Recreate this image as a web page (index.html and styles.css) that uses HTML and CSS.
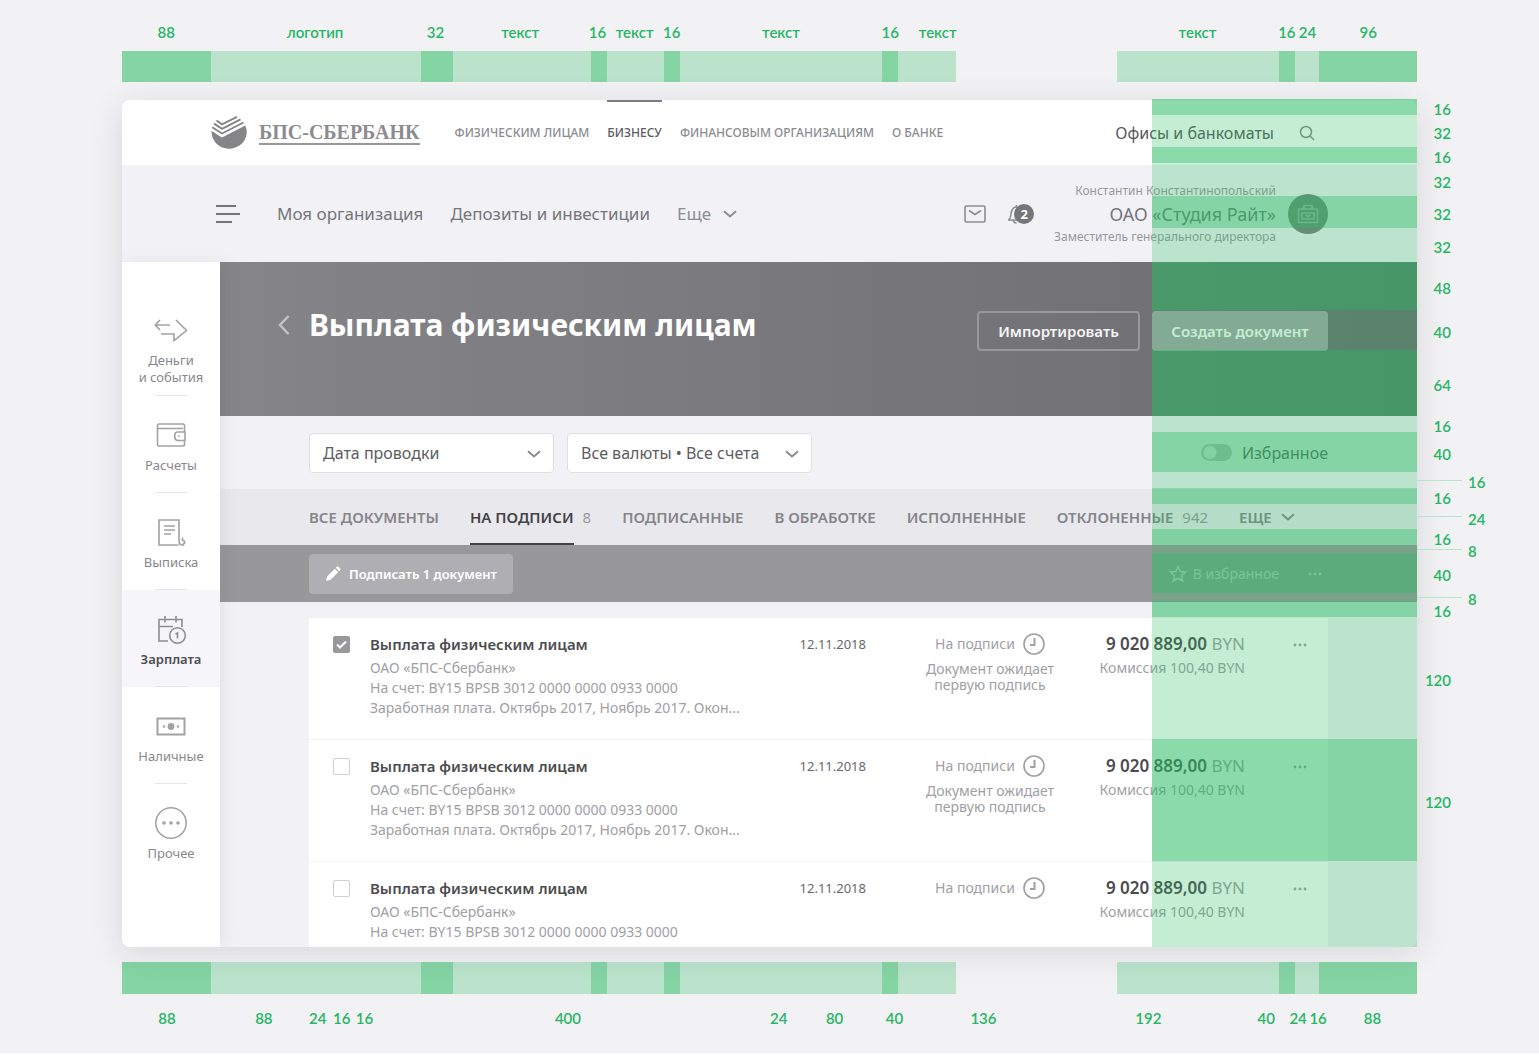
FILE: index.html
```
<!DOCTYPE html>
<html lang="ru">
<head>
<meta charset="utf-8">
<meta name="viewport" content="width=device-width, initial-scale=1">
<title>Выплата физическим лицам</title>
<link rel="stylesheet" href="styles.css">
</head>
<body>
<svg class="defs" width="0" height="0" aria-hidden="true">
  <symbol id="i-down" viewBox="0 0 14 8"><path d="M1 1.2l6 5.3 6-5.3" fill="none" stroke="currentColor" stroke-width="2"/></symbol>
  <symbol id="i-dots" viewBox="0 0 14 4"><g fill="currentColor"><circle cx="2" cy="2" r="1.4"/><circle cx="7" cy="2" r="1.4"/><circle cx="12" cy="2" r="1.4"/></g></symbol>
  <symbol id="i-clock" viewBox="0 0 22 22"><g fill="none" stroke="currentColor" stroke-width="1.6"><circle cx="11" cy="11" r="10"/><path d="M11.5 5v7H7" stroke-width="2"/></g></symbol>
</svg>

<div class="page">
  <div class="ruler ruler-top">
    <span class="num">88</span><span class="num">логотип</span><span class="num">32</span><span class="num">текст</span><span class="num">16</span><span class="num">текст</span><span class="num">16</span><span class="num">текст</span><span class="num">16</span><span class="num num-end">текст</span><span></span><span class="num">текст</span><span class="num">16</span><span class="num">24</span><span class="num">96</span>
  </div>
  <div class="ruler bar">
    <i class="dark"></i><i class="light"></i><i class="dark"></i><i class="light"></i><i class="dark"></i><i class="light"></i><i class="dark"></i><i class="light"></i><i class="dark"></i><i class="light"></i><i></i><i class="light"></i><i class="dark"></i><i class="light"></i><i class="dark"></i>
  </div>

  <div class="stage">
    <div class="app">
      <header class="topbar">
        <a class="logo" href="#">
          <svg width="36" height="34" viewBox="0 0 36 34"><path d="M.6 15L11 21.500 34.200 9.500A17.600 16.500 0 1 1 .6 15z" fill="#858588"/><g fill="none" stroke="#858588" stroke-width="1.900"><path d="M1.200 11.300L11 17.500 32.500 6.500"/><path d="M3 7.600L11 12.900 29.500 3.400"/><path d="M5.500 4.500L11 8.300 26 .9"/></g></svg>
          <span class="logo-text">БПС-СБЕРБАНК</span>
        </a>
        <nav class="sites">
          <a href="#">ФИЗИЧЕСКИМ ЛИЦАМ</a><a href="#" class="active">БИЗНЕСУ</a><a href="#">ФИНАНСОВЫМ ОРГАНИЗАЦИЯМ</a><a href="#">О БАНКЕ</a>
        </nav>
        <a class="offices" href="#">Офисы и банкоматы</a>
        <button class="icon-btn search" aria-label="Поиск"><svg width="16" height="16" viewBox="0 0 16 16" fill="none" stroke="currentColor" stroke-width="1.500"><circle cx="7" cy="7" r="5.500"/><path d="M11 11l4 4"/></svg></button>
      </header>

      <div class="subbar">
        <button class="icon-btn" aria-label="Меню"><svg width="25" height="20" viewBox="0 0 25 20" stroke="currentColor" stroke-width="2"><path d="M0 2h20M0 10h24M0 18h16"/></svg></button>
        <nav class="sections">
          <a href="#">Моя организация</a><a href="#">Депозиты и инвестиции</a><a href="#" class="more">Еще <svg width="14" height="8"><use href="#i-down"/></svg></a>
        </nav>
        <div class="alerts">
          <button class="icon-btn" aria-label="Сообщения"><svg width="22" height="18" viewBox="0 0 22 18" fill="none" stroke="currentColor" stroke-width="1.600"><rect x="1" y="1" width="20" height="16" rx="1.500"/><path d="M5 5.500l6 4 6-4"/></svg></button>
          <button class="icon-btn bell" aria-label="Уведомления"><svg width="22" height="20" viewBox="0 0 22 20" fill="none" stroke="currentColor" stroke-width="1.600"><path d="M1 16h16M1.500 16c3-2 2-5 2.800-8 .8-3 2.500-5 5.200-5V1M6.500 16.500c0 1.800 1.200 2.500 3 2.500"/></svg><span class="badge">2</span></button>
        </div>
        <div class="user">
          <span class="small">Константин Константинопольский</span>
          <span class="org">ОАО «Студия Райт»</span>
          <span class="small">Заместитель генерального директора</span>
        </div>
        <span class="avatar"><svg width="22" height="20" viewBox="0 0 22 20" fill="none" stroke="currentColor" stroke-width="1.600"><rect x="1.500" y="5" width="19" height="13.500" rx="1"/><path d="M7 5V1.500h8V5M5 9h12v6H5zM8.500 11l2.500 1.500 2.500-1.500"/></svg></span>
      </div>

      <div class="body">
        <nav class="side">
          <a href="#"><svg width="34" height="32" viewBox="0 0 34 32"><path d="M16 11H1.500M6 6L1.200 11 6 16M7 20h13v6.500L32.500 16.500 22 6" /></svg>Деньги<br>и события</a>
          <a href="#"><svg width="32" height="32" viewBox="0 0 32 32"><path d="M29.500 12.500V6.500a1.500 1.500 0 0 0-1.500-1.500H4A1.500 1.500 0 0 0 2.500 6.500v19A1.500 1.500 0 0 0 4 27h24a1.500 1.500 0 0 0 1.500-1.500v-3M2.500 9.500H28M30 13v8.500h-7a3.200 3.200 0 0 1-3.200-3.200V16.200A3.200 3.200 0 0 1 23 13zM24 16.500v1.500"/></svg>Расчеты</a>
          <a href="#"><svg width="32" height="32" viewBox="0 0 32 32"><path d="M24 22V4H4v25h19.500M24 22c0 4 0 7 2.500 7h2v-2M9 10h11M9 14h11M9 18h7M27.500 21.500v3l2 .500v3"/></svg>Выписка</a>
          <a href="#" class="active"><svg width="32" height="32" viewBox="0 0 32 32"><path d="M13 28H4V6.500h23V14M4 13.500h14M10 3v6.500M21 3v6.500"/><circle cx="22.500" cy="22.500" r="7.800"/><path d="M20.500 21l2-1v5.500"/></svg>Зарплата</a>
          <a href="#"><svg width="32" height="32" viewBox="0 0 32 32"><path d="M2.500 8.500h27v16h-27z" stroke-width="2"/><circle cx="16" cy="16.500" r="2.600" fill="currentColor"/><circle cx="9" cy="16.500" r=".5"/><circle cx="23" cy="16.500" r=".5"/></svg>Наличные</a>
          <a href="#"><svg width="34" height="32" viewBox="0 0 34 32"><circle cx="17" cy="16" r="15.200"/><g stroke="none" fill="currentColor"><circle cx="10" cy="16" r="1.800"/><circle cx="17" cy="16" r="1.800"/><circle cx="24" cy="16" r="1.800"/></g></svg>Прочее</a>
        </nav>

        <main class="main">
          <section class="hero">
            <a class="back" href="#" aria-label="Назад"><svg width="12" height="20" viewBox="0 0 12 20" fill="none" stroke="currentColor" stroke-width="2.400"><path d="M10.500 1L2 10l8.500 9"/></svg></a>
            <h1>Выплата физическим лицам</h1>
            <button class="btn outline">Импортировать</button>
            <button class="btn filled">Создать документ</button>
          </section>

          <section class="filters">
            <label class="select"><select aria-label="Дата"><option>Дата проводки</option></select><svg width="14" height="8"><use href="#i-down"/></svg></label>
            <label class="select"><select aria-label="Валюты и счета"><option>Все валюты • Все счета</option></select><svg width="14" height="8"><use href="#i-down"/></svg></label>
            <label class="toggle"><input type="checkbox">Избранное</label>
          </section>

          <nav class="tabs">
            <a href="#">ВСЕ ДОКУМЕНТЫ</a>
            <a href="#" class="active"><b>НА ПОДПИСИ</b><span>8</span></a>
            <a href="#">ПОДПИСАННЫЕ</a>
            <a href="#">В ОБРАБОТКЕ</a>
            <a href="#">ИСПОЛНЕННЫЕ</a>
            <a href="#">ОТКЛОНЕННЫЕ<span>942</span></a>
            <a href="#">ЕЩЕ<svg width="14" height="8"><use href="#i-down"/></svg></a>
          </nav>

          <section class="actions">
            <button class="btn sign"><svg width="16" height="16" viewBox="0 0 16 16" fill="currentColor"><path d="M1 15l1.200-4.600 7.600-7.600 3.400 3.400-7.600 7.600zM10.800 1.800l1.200-1.200q.6-.4 1.200 0l2.200 2.200q.5.600 0 1.200l-1.200 1.200z"/></svg>Подписать 1 документ</button>
            <button class="fav"><svg width="18" height="18" viewBox="0 0 18 18" fill="none" stroke="currentColor" stroke-width="1.600"><path d="M9 1.500l2.200 5 5.300.500-4 3.600 1.200 5.400L9 13.200 4.300 16l1.200-5.400-4-3.600 5.300-.500z"/></svg>В избранное</button>
            <button class="icon-btn" aria-label="Еще"><svg width="16" height="4"><use href="#i-dots"/></svg></button>
          </section>

          <table class="docs">
            <colgroup><col class="c-check"><col><col class="c-date"><col class="c-status"><col class="c-sum"><col class="c-more"></colgroup>
            <tr>
              <td><input type="checkbox" aria-label="Выбрать документ" checked></td>
              <td class="info"><strong>Выплата физическим лицам</strong><p>ОАО «БПС-Сбербанк»</p><p>На счет: BY15 BPSB 3012 0000 0000 0933 0000</p><p>Заработная плата. Октябрь 2017, Ноябрь 2017. Окон...</p></td>
              <td class="date">12.11.2018</td>
              <td class="status"><span class="state">На подписи <svg width="22" height="22"><use href="#i-clock"/></svg></span><p>Документ ожидает<br>первую подпись</p></td>
              <td class="sum"><strong>9 020 889,00</strong> BYN<p>Комиссия 100,40 BYN</p></td>
              <td class="more"><button class="icon-btn" aria-label="Еще"><svg width="14" height="4"><use href="#i-dots"/></svg></button></td>
            </tr>
            <tr>
              <td><input type="checkbox" aria-label="Выбрать документ"></td>
              <td class="info"><strong>Выплата физическим лицам</strong><p>ОАО «БПС-Сбербанк»</p><p>На счет: BY15 BPSB 3012 0000 0000 0933 0000</p><p>Заработная плата. Октябрь 2017, Ноябрь 2017. Окон...</p></td>
              <td class="date">12.11.2018</td>
              <td class="status"><span class="state">На подписи <svg width="22" height="22"><use href="#i-clock"/></svg></span><p>Документ ожидает<br>первую подпись</p></td>
              <td class="sum"><strong>9 020 889,00</strong> BYN<p>Комиссия 100,40 BYN</p></td>
              <td class="more"><button class="icon-btn" aria-label="Еще"><svg width="14" height="4"><use href="#i-dots"/></svg></button></td>
            </tr>
            <tr>
              <td><input type="checkbox" aria-label="Выбрать документ"></td>
              <td class="info"><strong>Выплата физическим лицам</strong><p>ОАО «БПС-Сбербанк»</p><p>На счет: BY15 BPSB 3012 0000 0000 0933 0000</p></td>
              <td class="date">12.11.2018</td>
              <td class="status"><span class="state">На подписи <svg width="22" height="22"><use href="#i-clock"/></svg></span></td>
              <td class="sum"><strong>9 020 889,00</strong> BYN<p>Комиссия 100,40 BYN</p></td>
              <td class="more"><button class="icon-btn" aria-label="Еще"><svg width="14" height="4"><use href="#i-dots"/></svg></button></td>
            </tr>
          </table>
        </main>
      </div>
    </div>

    <div class="bands">
      <div class="band h16"><i class="dark"></i><span class="num">16</span></div>
      <div class="band h32"><i class="light"></i><span class="num">32</span></div>
      <div class="band h16"><i class="dark"></i><span class="num">16</span></div>
      <div class="band h33"><i class="light"></i><span class="num">32</span></div>
      <div class="band h32"><i class="dark"></i><span class="num">32</span></div>
      <div class="band h34"><i class="light"></i><span class="num">32</span></div>
      <div class="band h48"><i class="dark"></i><span class="num">48</span></div>
      <div class="band h40"><i class="light"></i><span class="num">40</span></div>
      <div class="band h66"><i class="dark"></i><span class="num">64</span></div>
      <div class="band h16"><i class="light"></i><span class="num">16</span></div>
      <div class="band h40"><i class="dark"></i><span class="num">40</span></div>
      <div class="band h16"><i class="light"></i><span class="tick"></span><span class="num far">16</span></div>
      <div class="band h16"><i class="dark"></i><span class="num">16</span></div>
      <div class="band h25"><i class="light"></i><span class="tick"></span><span class="num far">24</span></div>
      <div class="band h16"><i class="dark"></i><span class="num">16</span></div>
      <div class="band h8"><i class="light"></i><span class="tick"></span><span class="num far">8</span></div>
      <div class="band h40"><i class="dark"></i><span class="num">40</span></div>
      <div class="band h8"><i class="light"></i><span class="tick"></span><span class="num far">8</span></div>
      <div class="band h16"><i class="dark"></i><span class="num">16</span></div>
      <div class="band h122"><i class="light"></i><span class="num">120</span></div>
      <div class="band h122"><i class="dark"></i><span class="num">120</span></div>
      <div class="band rest"><i class="light"></i></div>
    </div>
  </div>

  <div class="ruler bar bar-bottom">
    <i class="dark"></i><i class="light"></i><i class="dark"></i><i class="light"></i><i class="dark"></i><i class="light"></i><i class="dark"></i><i class="light"></i><i class="dark"></i><i class="light"></i><i></i><i class="light"></i><i class="dark"></i><i class="light"></i><i class="dark"></i>
  </div>
  <div class="ruler-bottom">
    <span class="num">88</span><span></span><span class="num">88</span><span class="num">24</span><span class="num">16</span><span class="num">16</span><span class="num">400</span><span class="num">24</span><span class="num">80</span><span class="num">40</span><span class="num">136</span><span class="num">192</span><span class="num">40</span><span class="num">24</span><span class="num">16</span><span class="num">88</span>
  </div>
</div>
</body>
</html>
```
FILE: styles.css
```
* { box-sizing: border-box; }

body {
  margin: 0;
  background: #f2f2f4;
  border-bottom: 2px solid #fdfdfe;
  font: 14px/20px "Noto Sans", "Open Sans", sans-serif;
  color: #75757a;
}

a { color: inherit; text-decoration: none; }
p { margin: 0; }
button, select { font: inherit; color: inherit; }
svg { flex: none; display: block; }
.defs { position: absolute; }

.icon-btn {
  display: flex;
  padding: 0;
  border: 0;
  background: none;
}

.page { padding: 22px 122px 25px; }

/* spacing rulers */
.num {
  font: 600 15px/20px Lato, "Open Sans", sans-serif;
  color: #27b566;
  white-space: nowrap;
}
.dark { background: rgba(41, 187, 97, .54); }
.light { background: rgba(41, 187, 97, .27); }

.ruler {
  display: grid;
  grid-template-columns: 89fr 210fr 32fr 138fr 16fr 57fr 16fr 202fr 16fr 58fr 161fr 162fr 16fr 24fr 98fr;
}
.ruler .num, .ruler-bottom .num { justify-self: center; }
.ruler .num-end { justify-self: end; }
.bar { height: 31px; margin-top: 9px; }
.bar-bottom { height: 32px; margin-top: 15px; }
.ruler-bottom {
  display: grid;
  grid-template-columns: 90fr 8fr 88fr 20fr 28fr 16fr 390fr 32fr 80fr 40fr 138fr 192fr 44fr 20fr 20fr 89fr;
  margin-top: 14px;
}

.stage { position: relative; margin-top: 18px; }

/* measured bands lie over the right edge of the app */
.bands {
  position: absolute;
  top: -1px;
  bottom: 0;
  left: calc(100% - 265px);
  width: 350px;
  display: flex;
  flex-direction: column;
  pointer-events: none;
}
.band { display: flex; align-items: center; }
.band i { width: 265px; align-self: stretch; }
.band .num { width: 34px; padding-top: 4px; text-align: right; }
.band .far { width: auto; margin-left: 6px; text-align: left; }
.tick { width: 45px; height: 1px; background: #b5e6ca; }
.h8 { height: 8px; }
.h16 { height: 16px; }
.h25 { height: 25px; }
.h32 { height: 32px; }
.h33 { height: 33px; }
.h34 { height: 34px; }
.h40 { height: 40px; }
.h48 { height: 48px; }
.h66 { height: 66px; }
.h122 { height: 122px; }
.rest { flex: 1; }

/* application */
.app {
  background: #f2f2f6;
  border-radius: 8px;
  overflow: hidden;
  box-shadow: 0 6px 32px rgba(30, 30, 60, .12);
}

.topbar {
  display: flex;
  align-items: center;
  height: 65px;
  padding: 0 102px 0 89px;
  background: #fff;
}
.logo { display: flex; align-items: center; gap: 12px; }
.logo-text {
  font: bold 20px/22px "Liberation Serif", serif;
  color: #8c8c90;
  border-bottom: 2px solid #98989b;
}
.sites {
  display: flex;
  gap: 18px;
  margin-left: 35px;
  align-self: stretch;
  font-size: 12px;
  line-height: 61px;
  color: #8c8c90;
  font-weight: 500;
}
.sites a { border-top: 2px solid transparent; white-space: nowrap; }
.sites .active { color: #5c5c61; border-color: #7c7c80; }
.offices { margin-left: auto; font-size: 16px; color: #58585c; white-space: nowrap; }
.search { margin-left: 25px; color: #88888c; }

.subbar {
  display: flex;
  align-items: center;
  height: 97px;
  padding: 0 89px 0 94px;
}
.sections {
  display: flex;
  gap: 27px;
  margin-left: 36px;
  font-size: 17px;
  white-space: nowrap;
}
.sections .more { display: flex; align-items: center; gap: 12px; color: #8c8c91; }
.alerts { display: flex; align-items: center; gap: 21px; margin-left: auto; color: #8c8c91; }
.bell { position: relative; width: 27px; }
.badge {
  position: absolute;
  right: 0;
  top: 0;
  width: 20px;
  height: 20px;
  border-radius: 50%;
  background: #75757a;
  color: #fff;
  font-size: 13px;
  font-weight: 700;
  line-height: 20px;
}
.user { margin-left: 20px; text-align: right; white-space: nowrap; }
.user span { display: block; }
.small { font-size: 12px; color: #98989c; }
.org { font-size: 18px; line-height: 26px; }
.avatar {
  display: flex;
  align-items: center;
  justify-content: center;
  width: 40px;
  height: 40px;
  margin-left: 12px;
  border-radius: 50%;
  background: #7e7e82;
  color: #b4b4b8;
}

.body { display: flex; }
.side {
  position: relative;
  flex: none;
  width: 98px;
  padding-top: 37px;
  background: #fff;
  box-shadow: 4px 0 16px rgba(40, 40, 90, .08);
  font-size: 13px;
  line-height: 17px;
  color: #88888c;
  text-align: center;
}
.side a {
  display: flex;
  flex-direction: column;
  align-items: center;
  justify-content: center;
  height: 97px;
  padding-top: 4px;
  background: linear-gradient(#e4e4e8, #e4e4e8) center bottom / 32px 1px no-repeat;
}
.side a:last-child { background: none; }
.side svg { margin-bottom: 6px; fill: none; stroke: currentColor; stroke-width: 1.6; color: #a2a2a6; }
.side .active { background-color: #f5f5fa; color: #4c4c50; font-weight: 600; }
.side .active svg { color: #8e8e92; }

.main { flex: 1; min-width: 0; }

.hero {
  display: flex;
  align-items: flex-start;
  padding: 49px 89px 65px 58px;
  background: linear-gradient(90deg, #858589, #6c6c70);
  color: #fff;
}
.back { padding: 4px 0; color: #c4c4c8; }
h1 { margin: 0 auto 0 19px; font-size: 30px; line-height: 28px; font-weight: 700; white-space: nowrap; }
.btn {
  display: flex;
  align-items: center;
  justify-content: center;
  height: 40px;
  padding: 0;
  border: 0;
  border-radius: 4px;
  font-weight: 600;
  white-space: nowrap;
}
.outline { width: 163px; background: none; border: 2px solid #98989c; color: #f4f4f6; font-size: 15px; }
.filled { width: 176px; margin-left: 12px; background: #a4a4a8; font-size: 15px; }

.filters {
  display: flex;
  align-items: center;
  gap: 13px;
  height: 73px;
  padding: 0 89px;
  font-size: 16px;
  color: #5c5c61;
}
.select { position: relative; width: 245px; }
.select select {
  width: 100%;
  height: 40px;
  padding: 0 13px;
  appearance: none;
  background: #fff;
  border: 1px solid #e0e0e4;
  border-radius: 4px;
}
.select svg { position: absolute; right: 13px; top: 17px; color: #8c8c91; }
.toggle { display: flex; align-items: center; gap: 10px; margin-left: auto; }
.toggle input {
  appearance: none;
  width: 31px;
  height: 17px;
  margin: 0;
  border-radius: 9px;
  background: radial-gradient(circle at 9px 50%, #ececf0 6px, transparent 7px) #bfbfc3;
}

.tabs {
  display: flex;
  gap: 31px;
  height: 56px;
  padding: 0 89px;
  background: #e9e9ed;
  font-size: 15px;
  line-height: 56px;
  font-weight: 600;
  color: #85858a;
  white-space: nowrap;
}
.tabs a { display: flex; align-items: center; gap: 9px; }
.tabs span { font-weight: 400; color: #98989c; }
.tabs b { font-weight: 600; color: #434347; box-shadow: inset 0 -2px #434347; }

.actions {
  display: flex;
  align-items: center;
  height: 57px;
  padding: 0 94px 0 89px;
  background: #98989b;
  color: #d4d4d8;
}
.sign { width: 204px; gap: 8px; background: #afafb3; color: #fff; font-size: 13px; }
.fav {
  display: flex;
  align-items: center;
  gap: 6px;
  margin: 0 28px 0 auto;
  padding: 0;
  border: 0;
  background: none;
}

.docs {
  width: calc(100% - 178px);
  margin: 16px 89px 0;
  table-layout: fixed;
  border-collapse: collapse;
  background: #fff;
  color: #a0a0a4;
}
.c-check { width: 61px; }
.c-date { width: 126px; }
.c-status { width: 188px; }
.c-sum { width: 161px; }
.c-more { width: 83px; }
.docs td { padding: 14px 0 21px; vertical-align: top; line-height: 24px; white-space: nowrap; }
.docs tr + tr { border-top: 1px solid #f4f4f6; }
.docs tr:last-child td { padding-bottom: 5px; }
.docs strong { font-weight: 600; color: #4c4c50; }
.info strong { display: block; margin-bottom: 2px; font-size: 15px; }
.info p { line-height: 20px; }
.docs .date { padding-right: 30px; text-align: right; font-size: 13px; color: #68686c; }
.status { text-align: center; }
.state { display: flex; align-items: center; justify-content: center; gap: 8px; }
.status p { margin-top: 5px; line-height: 16px; }
.sum { text-align: right; font-size: 17px; }
.sum p { margin-top: 2px; font-size: 14px; line-height: 20px; }
.docs .more { padding: 25px 0 0 48px; }
.docs input {
  appearance: none;
  display: block;
  width: 17px;
  height: 17px;
  margin: 4px 0 0 24px;
  border: 1px solid #d0d0d4;
  border-radius: 2px;
}
.docs input:checked {
  border-color: #98989b;
  background: #98989b url("data:image/svg+xml,%3Csvg xmlns='http://www.w3.org/2000/svg' viewBox='0 0 15 15'%3E%3Cpath d='M3 7.500l3 3 6-6' fill='none' stroke='%23fff' stroke-width='2'/%3E%3C/svg%3E") center / 15px 15px no-repeat;
}
```
